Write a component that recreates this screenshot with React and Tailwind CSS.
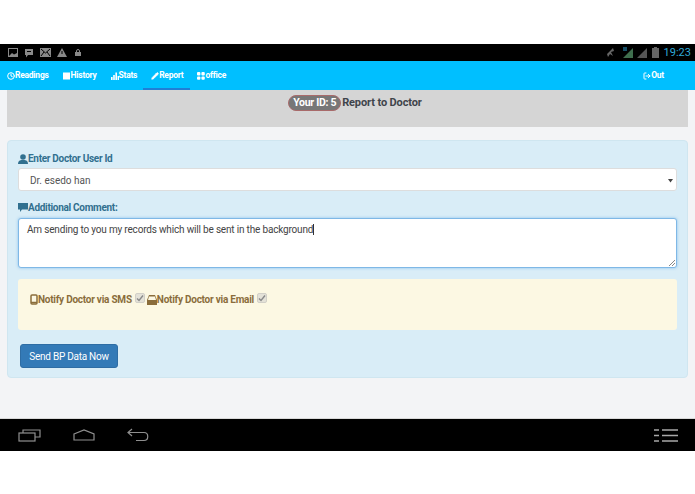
import { Clock, Pencil, LogOut } from 'lucide-react'

function Tab({ icon, label, className = '' }) {
  return (
    <div className={`flex items-center ${className}`}>
      {icon}
      <span>{label}</span>
    </div>
  )
}

function Check({ className }) {
  return (
    <span className={`w-[10px] h-[10px] rounded-[2px] bg-[#e4e2d8] border border-[#d2d0c8] flex items-center justify-center ${className}`}>
      <svg width="8" height="8" viewBox="0 0 8 8" fill="none" stroke="#8a8a8a" strokeWidth="1.4"><path d="M1 4.5 L3 6.5 L7 1.5" /></svg>
    </span>
  )
}

export default function App() {
  return (
    <div className="w-[695px] h-[494px] bg-white flex flex-col overflow-hidden font-['Roboto',sans-serif]">
      <div className="h-[44px]" />

      {/* android status bar */}
      <div className="h-[17px] bg-black flex items-center justify-between pl-[8px] pr-[4px]">
        <div className="flex items-center gap-[6px]">
          <svg width="10" height="9" viewBox="0 0 10 9"><rect x="0.5" y="0.5" width="9" height="8" fill="none" stroke="#8a8a8a" /><path d="M1 8 L4 5 L6 6.5 L9 5 V8 Z" fill="#8a8a8a" /></svg>
          <svg width="10" height="10" viewBox="0 0 10 10"><path d="M1 1 H9 V7 H4 L2 9.5 V7 H1 Z" fill="#8a8a8a" /><path d="M3 3.5 H7" stroke="#000" /></svg>
          <svg width="11" height="9" viewBox="0 0 11 9"><rect width="11" height="9" fill="#8a8a8a" /><path d="M1 1 L5.5 5 L10 1 M1 8 L4 4 M10 8 L7 4" stroke="#000" fill="none" /></svg>
          <svg width="10" height="9" viewBox="0 0 10 9"><path d="M5 0 L10 9 H0 Z" fill="#8a8a8a" /><path d="M5 3 V6" stroke="#000" /></svg>
          <svg width="6" height="7" viewBox="0 0 6 7" className="ml-[2px]"><rect y="3" width="6" height="4" fill="#8a8a8a" /><path d="M1.5 3 V2 A1.5 1.5 0 0 1 4.5 2 V3" fill="none" stroke="#8a8a8a" /></svg>
        </div>
        <div className="flex items-center">
          <svg width="10" height="11" viewBox="0 0 10 11" className="mr-[6px]"><path d="M1 7 L7 1 L8 4 L5 5 L7 9 L4 7 L2 10 Z" fill="#666" /></svg>
          <svg width="12" height="11" viewBox="0 0 12 11" className="mr-[3px]"><path d="M1 11 L11 1 V11 Z" fill="#3f6f4e" /><path d="M2 0 V4 M4 0 V4" stroke="#2f9fd0" /></svg>
          <svg width="11" height="10" viewBox="0 0 11 10" className="mr-[4px]"><path d="M0 10 L10 0 V10 Z" fill="#555" /></svg>
          <svg width="7" height="11" viewBox="0 0 7 11" className="mr-[5px]"><rect x="2" width="3" height="1" fill="#666" /><rect y="1" width="7" height="10" fill="#666" /></svg>
          <span className="text-[11px] leading-none text-[#2fa9d8]">19:23</span>
        </div>
      </div>

      {/* app nav */}
      <div className="h-[29px] bg-[#00bfff] flex items-center justify-between pl-[7px] pr-[31px] text-white text-[8.5px] tracking-[-0.25px] font-bold">
        <div className="h-full flex items-center">
          <Tab icon={<Clock size={8} strokeWidth={3} />} label="Readings" />
          <Tab
            className="ml-[14px]"
            label="History"
            icon={<svg width="8" height="8" viewBox="0 0 8 8" fill="white"><rect width="7" height="7" y="0.5" /></svg>}
          />
          <Tab
            className="ml-[14px]"
            label="Stats"
            icon={<svg width="8" height="8" viewBox="0 0 8 8" fill="white"><rect y="5" width="1.6" height="3" /><rect x="2.2" y="3" width="1.6" height="5" /><rect x="4.4" y="0.5" width="1.6" height="7.5" /><rect x="6.6" y="4" width="1.4" height="4" /></svg>}
          />
          <div className="ml-[6px] h-full flex items-center border-y-2 border-t-transparent border-b-[#1f7fd6] pl-[8px] pr-[7px]">
            <Tab icon={<Pencil size={8} fill="white" />} label="Report" />
          </div>
          <Tab
            className="ml-[7px]"
            label="office"
            icon={<svg width="8" height="8" viewBox="0 0 8 8" fill="white"><rect width="3.4" height="3.4" rx="1" /><rect x="4.4" width="3.4" height="3.4" rx="1" /><rect y="4.4" width="3.4" height="3.4" rx="1" /><rect x="4.4" y="4.4" width="3.4" height="3.4" rx="1" /></svg>}
          />
        </div>
        <Tab icon={<LogOut size={8} strokeWidth={3} />} label="Out" />
      </div>

      {/* page */}
      <div className="h-[329px] bg-[#f3f4f6] px-[7px] border-b border-[#d8d8d8]">
        <div className="h-[37px] bg-[#d5d5d5] flex items-center justify-center pb-[11px] pl-[15px]">
          <span className="h-[16px] px-[4px] rounded-full bg-[#777] border border-[#a86a6a] text-white text-[10.5px] tracking-[-0.3px] font-bold flex items-center">Your ID: 5</span>
          <span className="ml-px text-[11px] tracking-[-0.12px] font-bold text-[#3f444a]">Report to Doctor</span>
        </div>

        <div className="mt-[13px] h-[238px] bg-[#d9edf7] border border-[#cfe6f0] rounded-[4px] pl-[10px] pr-[10px] pt-[11px]">
          <div className="flex items-center h-[13px] text-[10px] tracking-[-0.3px] font-bold text-[#31708f]">
            <svg width="10" height="10" viewBox="0 0 10 10" fill="#31708f"><circle cx="5" cy="3" r="2.8" /><path d="M0 10 C0 6 3 6 5 6 C7 6 10 6 10 10 Z" /></svg>
            <span>Enter Doctor User Id</span>
          </div>
          <div className="mt-[3px] h-[23px] bg-white border border-[#dddddd] rounded-[3px] flex items-center justify-between pl-[11px] pr-[3px] pt-px text-[10px] text-[#555]">
            <span>Dr. esedo han</span>
            <svg width="5" height="5" viewBox="0 0 5 5" fill="#444"><path d="M0 1 H5 L2.5 4.5 Z" /></svg>
          </div>
          <div className="mt-[10px] flex items-center h-[13px] text-[10px] tracking-[-0.3px] font-bold text-[#31708f]">
            <svg width="10" height="9" viewBox="0 0 10 9" fill="#31708f"><path d="M0 0 H10 V6.5 H4 L2 9 V6.5 H0 Z" /></svg>
            <span>Additional Comment:</span>
          </div>
          <div className="relative mt-[4px] h-[50px] bg-white border border-[#7fb8e6] rounded-[3px] pl-[8px] pt-[3px] text-[10px] tracking-[-0.18px] text-[#444] shadow-[0_0_3px_rgba(102,175,233,0.7)]">
            <span>Am sending to you my records which will be sent in the background</span>
            <span className="inline-block w-px h-[11px] bg-[#333] align-[-2px]" />
            <svg width="7" height="7" viewBox="0 0 7 7" stroke="#888" className="absolute right-px bottom-px"><path d="M1 7 L7 1 M4 7 L7 4" /></svg>
          </div>

          <div className="mt-[11px] h-[51px] bg-[#fcf8e3] rounded-[3px] pl-[12px] pt-[13px] flex items-start text-[10px] tracking-[-0.24px] font-bold text-[#8a6d3b]">
            <div className="flex items-center">
              <svg width="8" height="11" viewBox="0 0 8 11" fill="none" stroke="#8a6d3b" strokeWidth="1.5"><rect x="1" y="1" width="6" height="9" rx="1" /><path d="M1 8.5 H7" /></svg>
              <span>Notify Doctor via SMS</span>
              <Check className="ml-[3px] -mt-[3px]" />
            </div>
            <div className="flex items-center ml-[2px]">
              <svg width="10" height="10" viewBox="0 0 10 10" fill="#8a6d3b"><path d="M2 0 H8 L10 5 V10 H0 V5 Z" /><path d="M2 1.5 H8 L9 5 H1 Z" fill="#fcf8e3" /></svg>
              <span>Notify Doctor via Email</span>
              <Check className="ml-[3px] -mt-[3px]" />
            </div>
          </div>

          <button className="mt-[14px] ml-[2px] block w-[98px] h-[24px] bg-[#337ab7] border border-[#2e6da4] rounded-[3px] text-white text-[10px] tracking-[-0.25px]">Send BP Data Now</button>
        </div>
      </div>

      {/* android nav bar */}
      <div className="h-[32px] bg-black flex items-center justify-between pl-[18px] pr-[17px]">
        <div className="flex items-center">
          <svg width="23" height="14" viewBox="0 0 23 14" fill="none" stroke="#8f8f8f" strokeWidth="1.2"><rect x="1" y="5" width="16" height="8" /><path d="M5 5 V2 H22 V9 H17" /></svg>
          <svg width="22" height="12" viewBox="0 0 22 12" fill="none" stroke="#8f8f8f" strokeWidth="1.2" className="ml-[32px]"><path d="M1 5 L11 1 L21 5 V11 H1 Z" /></svg>
          <svg width="23" height="14" viewBox="0 0 23 14" fill="none" stroke="#8f8f8f" strokeWidth="1.2" className="ml-[32px]"><path d="M5 1 L1 4.5 L5 8 M1 4.5 H17 C22 4.5 22 12.5 17 12.5 H9" /></svg>
        </div>
        <svg width="24" height="13" viewBox="0 0 24 13" stroke="#a8a8a8" strokeWidth="1.5"><path d="M0 1 H5 M8 1 H24 M0 6.5 H5 M8 6.5 H24 M0 12 H5 M8 12 H24" /></svg>
      </div>
    </div>
  )
}
